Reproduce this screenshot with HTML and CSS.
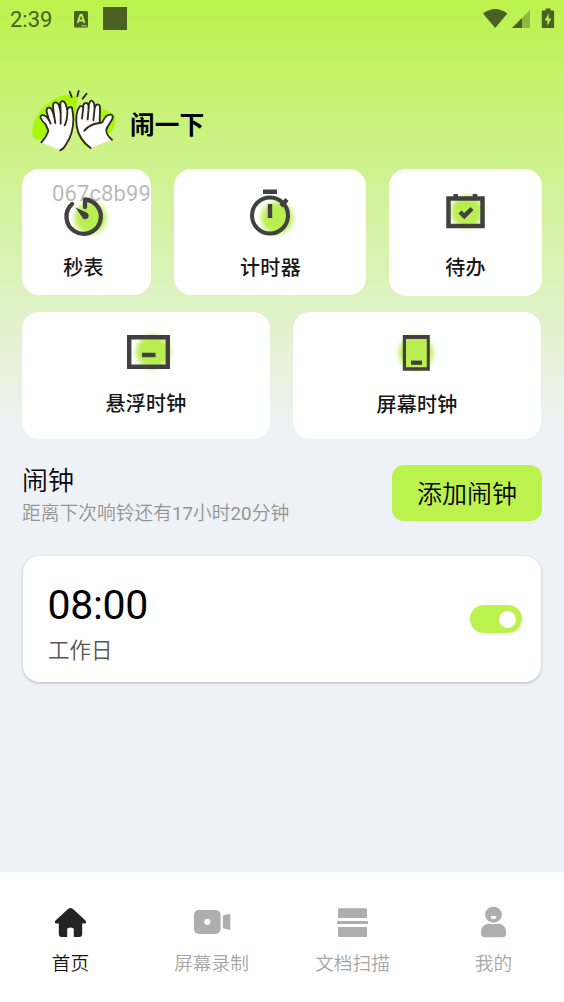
FILE: index.html
```html
<!DOCTYPE html>
<html lang="zh-CN">
<head>
<meta charset="utf-8">
<title>闹一下</title>
<link rel="stylesheet" href="styles.css">
</head>
<body>
<div class="app">
  <header class="status">
    <span class="status-time">2:39</span>
    <svg class="status-input" width="14" height="17" viewBox="0 0 14 17"><rect width="14" height="16.5" rx="1.5" fill="#4b6123"/><path d="M3.6 12 6.3 4h1.5l2.7 8M4.7 9.5h4.7" fill="none" stroke="#bcf050" stroke-width="1.8"/><path d="M7.5 14.6h5" stroke="#bcf050" stroke-width="1.2" stroke-dasharray="1.3 .5"/></svg>
    <span class="status-square"></span>
    <svg class="status-right" width="72" height="22" viewBox="0 0 72 22"><path d="M1 5.500Q13.200-3.500 25.400 5.500L13.200 20Z" fill="#4b6123"/><path d="M48 2v18H30Z" fill="#90b741"/><path d="M40 10v10H30Z" fill="#4b6123"/><g transform="translate(1.600 0)"><path d="M62 .5h5v2h2.700q.8 0 .8.8v16q0 .8-.8.8H59q-.8 0-.8-.8v-16q0-.8.8-.8h3Z" fill="#4b6123"/><path d="M65 5.500 61 12.500h2.700v5.200L67.800 10.500H65Z" fill="#bcf050"/></g></svg>
  </header>

  <div class="brand">
    <svg class="brand-logo" width="87" height="64" viewBox="30 28 261 192">
      <path d="M38 168C32 130 59 85 96 62C125 43 156 42 174 54L162 120L105 174C72 178 43 186 38 168Z" fill="#aaf50c"/>
      <path d="M170 92Q220 70 265 94Q288 101 287 125Q281 157 260 168L205 207Q181 190 171 157Z" fill="#aaf50c"/>
      <g stroke="#302820" stroke-width="5.5" stroke-linecap="round" stroke-linejoin="round">
        <path d="M64 188Q82 168 85 153L77 134Q66 124 62 115C59 105 72 103 80 112L87 121L80 96C78 82 90 79 96 91L103 112L99 80C98 66 111 64 117 77L122 99L121 72C122 61 133 62 137 74L142 90Q148 77 156 85C161 106 162 132 155 158Q149 180 138 194Q132 207 121 212" fill="#fff"/>
        <path d="M87 121L92 132M103 112L106 130M122 99L122 132M142 90Q143 119 134 137" fill="none"/>
        <path d="M212 205C191 190 174 165 170 139C167 113 171 92 178 82Q182 76 190 83C187 72 199 65 205 75L206 84C207 61 215 58 222 70L224 84C229 69 240 72 240 85L239 130L247 128Q257 105 270 105C281 104 280 116 273 125L263 141C254 153 261 168 276 180" fill="#fff"/>
        <path d="M190 83L186 117M206 84L203 119M224 84L220 122M239 130C215 132 202 142 193 153" fill="none"/>
        <path d="M149 36L155 52M176 34L172 50M200 42L188 57" fill="none"/>
      </g>
    </svg>
    <h1 class="brand-name">闹一下</h1>
  </div>

  <main class="content">
    <div class="row row-three">
      <section class="tile tile-stopwatch">
        <span class="tag">067c8b99</span>
        <svg class="tile-icon" width="64" height="54" viewBox="51.500 189 64 54"><circle class="glow" cx="90" cy="218" r="16"/><path d="M84.500 207V199.500A17.200 17.200 0 1 1 71.500 204" fill="none" stroke="#414141" stroke-width="4.300" stroke-linejoin="round" stroke-linecap="round"/><path d="M75 207.500 86 212.500A3.500 3.500 0 1 1 81.500 217Z" fill="#414141"/></svg>
        <span class="tile-label">秒表</span>
      </section>
      <section class="tile">
        <svg class="tile-icon" width="64" height="54" viewBox="238 189 64 54"><circle class="glow" cx="277" cy="218" r="16"/><circle cx="270" cy="215.500" r="18" fill="none" stroke="#414141" stroke-width="4"/><path d="M263 191.800h14M270 204v14M281 206 287 199.500" fill="none" stroke="#414141" stroke-width="4.400"/></svg>
        <span class="tile-label label-timer">计时器</span>
      </section>
      <section class="tile tile-todo">
        <svg class="tile-icon" width="64" height="54" viewBox="434 189 64 54"><circle class="glow" cx="467" cy="211.500" r="16"/><path d="M448.500 198.500h34v27.500h-34ZM455.700 194v4M475 194v4" fill="none" stroke="#414141" stroke-width="4.500"/><path d="M460 212 464.300 216.200 472 208.500" fill="none" stroke="#414141" stroke-width="4.500"/></svg>
        <span class="tile-label">待办</span>
      </section>
    </div>
    <div class="row row-two">
      <section class="tile">
        <svg class="tile-icon" width="64" height="54" viewBox="114 329 64 54"><circle class="glow" cx="153" cy="352" r="17"/><path d="M129.200 337.200h38.600v29.600h-38.600ZM142 355h13.500" fill="none" stroke="#414141" stroke-width="4.400"/></svg>
        <span class="tile-label">悬浮时钟</span>
      </section>
      <section class="tile tile-screen">
        <svg class="tile-icon" width="64" height="54" viewBox="385 329 64 54"><circle class="glow" cx="416" cy="353" r="17"/><path d="M404.500 337H428v31.500h-23.500Z" fill="#bced52"/><path d="M402.800 335h27v35.800h-27ZM406 339v28.200h20.800V339Z" fill="#414141" fill-rule="evenodd"/><path d="M411 362.700h11" stroke="#414141" stroke-width="4.200"/></svg>
        <span class="tile-label">屏幕时钟</span>
      </section>
    </div>

    <div class="alarm-head">
      <div>
        <h2 class="alarm-title">闹钟</h2>
        <p class="alarm-next">距离下次响铃还有<span class="num">17</span>小时<span class="num">20</span>分钟</p>
      </div>
      <button class="add">添加闹钟</button>
    </div>

    <section class="alarm-card">
      <div>
        <div class="alarm-time">08:00</div>
        <div class="alarm-days">工作日</div>
      </div>
      <span class="switch"><span class="knob"></span></span>
    </section>
  </main>

  <nav class="tabs">
    <a class="tab tab-active">
      <svg class="tab-icon" width="40" height="36" viewBox="51 904 40 36"><path d="M68 909Q70.500 906.800 73 909L85.500 920.500Q87.300 923 84.500 923.500H82.200V934Q82.200 937 79.200 937H73.800V929.500Q73.800 927.500 70.500 927.500T67.200 929.500V937H61.800Q58.800 937 58.800 934V923.500H56.500Q53.800 923 55.500 920.500Z" fill="#242424"/></svg>
      <span>首页</span>
    </a>
    <a class="tab">
      <svg class="tab-icon" width="40" height="36" viewBox="192 904 40 36"><rect x="193.900" y="910" width="26.700" height="24" rx="5" fill="#aeaeae"/><circle cx="207.400" cy="921.800" r="3.100" fill="#fff"/><path d="M224 915 230.300 913.800V930L224 928.500Q222.900 928.200 222.900 927V916.500Q222.900 915.300 224 915Z" fill="#aeaeae"/></svg>
      <span>屏幕录制</span>
    </a>
    <a class="tab">
      <svg class="tab-icon" width="40" height="36" viewBox="333 904 40 36"><path d="M339 908.200h27q1 0 1 1v8.800h-29v-8.800q0-1 1-1ZM337 921h31v3h-31ZM338 927h29v9q0 1-1 1h-27q-1 0-1-1Z" fill="#aeaeae"/></svg>
      <span>文档扫描</span>
    </a>
    <a class="tab">
      <svg class="tab-icon" width="40" height="36" viewBox="474 904 40 36"><ellipse cx="493.500" cy="914.700" rx="8.400" ry="8" fill="#aeaeae"/><path d="M488.500 923.500Q493.500 925 498.500 923.500Q506 924.500 506.200 933Q506.200 937.200 502.200 937.200H484.800Q480.800 937.200 480.800 933Q481 924.500 488.500 923.500Z" fill="#aeaeae"/><path d="M490.700 916h5.600q0 3.200-2.800 3.200t-2.800-3.200Z" fill="#fff"/></svg>
      <span>我的</span>
    </a>
  </nav>
</div>
</body>
</html>
```
FILE: styles.css
```css
* { box-sizing: border-box; }
body { margin: 0; font-family: Roboto, "Noto Sans CJK SC", sans-serif; }
h1, h2, p { margin: 0; font-weight: 400; }
.app {
  width: 564px;
  height: 1002px;
  display: flex;
  flex-direction: column;
  background: linear-gradient(#bbf24c 0, #eef2f6 430px);
  overflow: hidden;
}
.status { display: flex; height: 38px; padding: 0 10px; align-items: flex-start; color: #4b6123; }
.status-time { width: 64px; font-size: 22px; line-height: 38px; padding-top: 1px; }
.status-input { margin-top: 11px; }
.status-square { width: 24px; height: 23px; margin: 7px 0 0 15px; background: #4b6123; }
.status-right { margin: 8px 0 0 auto; overflow: visible; }
.brand { display: flex; height: 131px; padding: 51px 0 0 30px; }
.brand-logo { flex: none; }
.brand-name { margin-left: 13px; font-size: 24.700px; line-height: 36px; padding-top: 19px; font-weight: 700; color: #000; }
.content { flex: 1; padding: 0 22px; }
.row { display: grid; }
.row-three { grid-template-columns: 129px 192px 153px; column-gap: 23px; height: 126px; }
.row-two { grid-template-columns: 248px 248px; column-gap: 23px; height: 127px; margin-top: 17px; }
.tile { position: relative; display: flex; flex-direction: column; align-items: center; border-radius: 17px; background: #fff; padding-top: 20px; }
.row-three .tile { height: 126px; }
.row-three .tile-todo { height: 127px; }
.row-two .tile { padding-top: 17px; }
.tile-stopwatch { padding-right: 6px; }
.tile-icon { flex: none; overflow: visible; }
.glow { fill: #b9ee50; filter: blur(2.5px); }
.tile-label { font-size: 20px; line-height: 30px; margin-top: 10px; font-weight: 500; color: #171717; letter-spacing: .3px; white-space: nowrap; }
.label-timer { padding-left: 1px; }
.row-two .tile-label { margin-top: 6px; }
.row-two .tile-screen .tile-label { margin-top: 7px; }
.tag { position: absolute; z-index: 1; left: 30px; top: 11px; font-size: 22px; line-height: 27px; color: rgba(145, 145, 145, .65); letter-spacing: .1px; }
.alarm-head { display: flex; justify-content: space-between; height: 56px; margin-top: 26px; }
.alarm-title, .alarm-next, .add, .alarm-days, .tab { font-family: "Noto Sans CJK SC DemiLight", "Noto Sans CJK SC", sans-serif; font-weight: 350; }
.alarm-title { font-size: 26px; line-height: 28px; color: #000; }
.alarm-next { font-size: 18.750px; line-height: 26px; margin-top: 6px; color: #949494; white-space: nowrap; }
.num { font-family: Roboto, sans-serif; font-weight: 400; }
.add { width: 150px; height: 56px; padding: 0 0 2px; border: 0; border-radius: 12px; background: #bcf24e; color: #000; font-size: 25px; line-height: 36px; }
.alarm-card { display: flex; justify-content: space-between; height: 126px; margin: 35px 1px 0; padding: 25px 19px 0 25px; border-radius: 16px; background: #fff; box-shadow: 0 1px 3px rgba(0, 0, 0, .25); }
.alarm-time { font-size: 41px; line-height: 48px; color: #000; letter-spacing: -.3px; margin-left: -.5px; }
.alarm-days { font-size: 21.500px; line-height: 30px; margin-top: 5px; color: #555; }
.switch { display: flex; justify-content: flex-end; align-items: center; width: 52px; height: 28px; margin-top: 24px; padding-right: 6px; border-radius: 14px; background: #bcf24e; }
.knob { width: 17px; height: 17px; border-radius: 50%; background: #fff; }
.tabs { display: grid; grid-template-columns: repeat(4, 1fr); height: 130px; background: #fff; }
.tab { display: flex; flex-direction: column; align-items: center; padding-top: 32px; font-size: 18.700px; line-height: 26px; color: #a6a6a6; }
.tab-active { color: #181818; }
.tab-icon { margin-bottom: 9px; }
```
